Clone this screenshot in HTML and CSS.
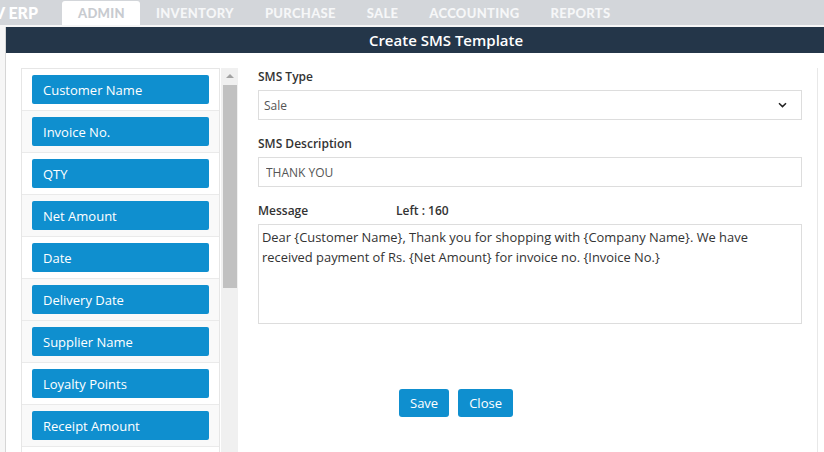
FILE: index.html
```html
<!DOCTYPE html>
<html>
<head>
<meta charset="utf-8">
<link rel="stylesheet" href="styles.css">
</head>
<body>
<header class="topbar">
  <div class="logo">V ERP</div>
  <nav class="tabs">
    <a class="tab active">ADMIN</a>
    <a class="tab">INVENTORY</a>
    <a class="tab">PURCHASE</a>
    <a class="tab">SALE</a>
    <a class="tab">ACCOUNTING</a>
    <a class="tab">REPORTS</a>
  </nav>
</header>
<div class="backdrop">
  <div class="modal">
    <div class="modal-head">Create SMS Template</div>
    <div class="modal-body">
      <div class="fields-col">
        <ul class="field-list">
          <li class="row"><button class="field-btn">Customer Name</button></li>
          <li class="row alt"><button class="field-btn">Invoice No.</button></li>
          <li class="row"><button class="field-btn">QTY</button></li>
          <li class="row alt"><button class="field-btn">Net Amount</button></li>
          <li class="row"><button class="field-btn">Date</button></li>
          <li class="row alt"><button class="field-btn">Delivery Date</button></li>
          <li class="row alt"><button class="field-btn">Supplier Name</button></li>
          <li class="row"><button class="field-btn">Loyalty Points</button></li>
          <li class="row alt"><button class="field-btn">Receipt Amount</button></li>
          <li class="row"></li>
        </ul>
        <div class="scrollbar">
          <div class="arrow"></div>
          <div class="thumb"></div>
        </div>
      </div>
      <div class="form">
        <label class="lbl">SMS Type</label>
        <div class="select-box">
          <span>Sale</span>
          <svg class="chev" width="9" height="6" viewBox="0 0 9 6"><path d="M1 1.2 L4.5 4.6 L8 1.2" fill="none" stroke="#222" stroke-width="1.5"/></svg>
        </div>
        <label class="lbl gap">SMS Description</label>
        <input class="text-in" type="text" value="THANK YOU">
        <div class="lbl gap msg-row"><span class="msg-lbl">Message</span><span>Left : 160</span></div>
        <textarea class="msg">Dear {Customer Name}, Thank you for shopping with {Company Name}. We have
received payment of Rs. {Net Amount} for invoice no. {Invoice No.}</textarea>
        <div class="actions">
          <button class="btn">Save</button>
          <button class="btn">Close</button>
        </div>
      </div>
      <div class="edge"></div>
    </div>
  </div>
</div>
</body>
</html>
```

FILE: styles.css
```css
html, body {
  margin: 0;
  padding: 0;
  width: 824px;
  height: 452px;
  overflow: hidden;
  background: #f4f4f4;
  font-family: "Open Sans", "Noto Sans", sans-serif;
}

.topbar {
  height: 25px;
  background: #d3d6da;
  display: flex;
  align-items: flex-end;
}

.logo {
  width: 62px;
  height: 25px;
  line-height: 25px;
  color: #ffffff;
  font-family: "Lato", sans-serif;
  font-weight: 900;
  font-size: 16px;
  text-indent: -6px;
  white-space: nowrap;
  overflow: hidden;
  align-self: flex-start;
}

.tabs {
  display: flex;
  height: 24px;
}

.tab {
  padding: 0 15px 0 16px;
  height: 24px;
  line-height: 25px;
  font-family: "Lato", sans-serif;
  font-weight: 900;
  font-size: 13px;
  letter-spacing: 0.3px;
  color: #f6f7f8;
}

.tab.active {
  background: #ffffff;
  color: #c8cbd0;
  border-radius: 3px 3px 0 0;
}

.backdrop {
  padding-top: 2px;
  height: 425px;
  background: #f6f6f6;
}

.modal {
  margin-left: 5px;
  width: 880px;
  height: 440px;
  background: #ffffff;
  border-left: 1px solid #d6d6d6;
}

.modal-head {
  height: 26px;
  line-height: 26px;
  background: #243649;
  color: #ffffff;
  text-align: center;
  font-size: 15px;
  font-weight: 600;
}

.modal-body {
  display: flex;
  padding: 15px 0 0 15px;
}

.fields-col {
  display: flex;
  height: 400px;
}

.field-list {
  list-style: none;
  margin: 0;
  padding: 0;
  width: 197px;
  border: 1px solid #e6e6e6;
  border-bottom: none;
  height: 399px;
  overflow: hidden;
}

.row {
  padding: 6px 10px;
  min-height: 29px;
  border-bottom: 1px solid #eaeaea;
  background: #ffffff;
}

.row.alt {
  background: #f9f9f9;
}

.field-btn {
  display: block;
  width: 100%;
  height: 29px;
  border: none;
  border-radius: 2px;
  background: #0f8fcf;
  color: #ffffff;
  text-align: left;
  padding: 0 11px;
  font-family: "Open Sans", "Noto Sans", sans-serif;
  font-size: 13px;
}

.scrollbar {
  width: 17px;
  margin-left: 1px;
  background: #f0f0f0;
  display: flex;
  flex-direction: column;
  align-items: center;
}

.arrow {
  margin-top: 6px;
  width: 0;
  height: 0;
  border-left: 4px solid transparent;
  border-right: 4px solid transparent;
  border-bottom: 4px solid #a3a3a3;
}

.thumb {
  margin-top: 7px;
  width: 14px;
  height: 203px;
  background: #c1c1c1;
}

.form {
  width: 544px;
  margin-left: 20px;
  display: flex;
  flex-direction: column;
}

.lbl {
  display: block;
  height: 18px;
  line-height: 18px;
  font-size: 12px;
  font-weight: 600;
  color: #333333;
  margin-bottom: 4px;
}

.lbl.gap {
  margin-top: 15px;
}

.msg-row {
  display: flex;
}

.msg-lbl {
  width: 138px;
}

.select-box {
  box-sizing: border-box;
  height: 30px;
  border: 1px solid #dddddd;
  display: flex;
  align-items: center;
  justify-content: space-between;
  padding: 0 14px 0 5px;
  font-size: 12px;
  color: #555555;
}

.chev {
  display: block;
}

.text-in {
  box-sizing: border-box;
  height: 30px;
  border: 1px solid #dddddd;
  padding: 0 7px;
  font-family: "Open Sans", "Noto Sans", sans-serif;
  font-size: 12px;
  color: #555555;
  outline: none;
}

.msg {
  box-sizing: border-box;
  height: 100px;
  border: 1px solid #dddddd;
  padding: 2px 3px;
  font-family: "Open Sans", "Noto Sans", sans-serif;
  font-size: 12.9px;
  line-height: 20px;
  color: #333333;
  resize: none;
  outline: none;
  overflow: hidden;
}

.actions {
  display: flex;
  gap: 9px;
  margin-top: 65px;
  padding-left: 141px;
}

.btn {
  height: 28px;
  border: none;
  border-radius: 3px;
  background: #0f8fcf;
  color: #ffffff;
  padding: 0 11px;
  font-family: "Open Sans", "Noto Sans", sans-serif;
  font-size: 13px;
}

.edge {
  margin-left: 15px;
  width: 0;
  height: 400px;
  border-left: 1px solid #e8e8e8;
}
```
